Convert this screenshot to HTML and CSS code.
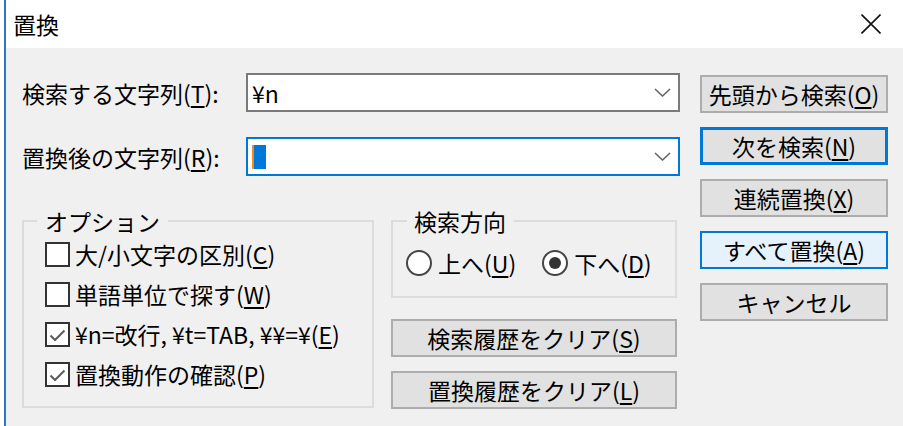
FILE: index.html
```html
<!DOCTYPE html>
<html lang="ja">
<head>
<meta charset="utf-8">
<title>置換</title>
<link rel="stylesheet" href="styles.css">
</head>
<body>
<div class="window">
  <div class="titlebar">
    <span class="title">置換</span>
    <svg class="close" width="20" height="20" viewBox="0 0 20 20"><path d="M0.5 0.5 L19.5 19.5 M19.5 0.5 L0.5 19.5" stroke="#111" stroke-width="1.6" fill="none"/></svg>
  </div>
  <div class="dialog">
    <div class="left">
      <div class="field-row">
        <label class="field-label">検索する文字列(<u>T</u>):</label>
        <div class="combo">
          <span class="combo-text">¥n</span>
          <svg class="chev" width="17" height="9" viewBox="0 0 17 9"><polyline points="1,1 8.5,8 16,1" stroke="#666" stroke-width="1.6" fill="none"/></svg>
        </div>
      </div>
      <div class="field-row second">
        <label class="field-label">置換後の文字列(<u>R</u>):</label>
        <div class="combo focused">
          <span class="combo-text"><span class="sel"></span></span>
          <svg class="chev" width="17" height="9" viewBox="0 0 17 9"><polyline points="1,1 8.5,8 16,1" stroke="#666" stroke-width="1.6" fill="none"/></svg>
        </div>
      </div>
      <div class="lower">
        <fieldset class="group options">
          <legend>オプション</legend>
          <div class="checks">
            <div class="check-row"><span class="cb"></span><span>大/小文字の区別(<u>C</u>)</span></div>
            <div class="check-row"><span class="cb"></span><span>単語単位で探す(<u>W</u>)</span></div>
            <div class="check-row"><span class="cb"><svg width="21" height="21" viewBox="0 0 21 21"><polyline points="3.5,11.5 8,16 17.5,6.5" stroke="#5c5c5c" stroke-width="2" fill="none"/></svg></span><span>¥n=改行, ¥t=TAB, ¥¥=¥(<u>E</u>)</span></div>
            <div class="check-row"><span class="cb"><svg width="21" height="21" viewBox="0 0 21 21"><polyline points="3.5,11.5 8,16 17.5,6.5" stroke="#5c5c5c" stroke-width="2" fill="none"/></svg></span><span>置換動作の確認(<u>P</u>)</span></div>
          </div>
        </fieldset>
        <div class="lower-right">
          <fieldset class="group direction">
            <legend>検索方向</legend>
            <div class="radios">
              <div class="radio-item"><span class="rb"></span><span>上へ(<u>U</u>)</span></div>
              <div class="radio-item"><span class="rb on"></span><span>下へ(<u>D</u>)</span></div>
            </div>
          </fieldset>
          <div class="clear-buttons">
            <button class="btn">検索履歴をクリア(<u>S</u>)</button>
            <button class="btn">置換履歴をクリア(<u>L</u>)</button>
          </div>
        </div>
      </div>
    </div>
    <div class="buttons">
      <button class="btn">先頭から検索(<u>O</u>)</button>
      <button class="btn default">次を検索(<u>N</u>)</button>
      <button class="btn">連続置換(<u>X</u>)</button>
      <button class="btn hover">すべて置換(<u>A</u>)</button>
      <button class="btn">キャンセル</button>
    </div>
  </div>
</div>
</body>
</html>
```
FILE: styles.css
```css
* { box-sizing: border-box; }

html, body {
  margin: 0;
  padding: 0;
  background: #ffffff;
}

body {
  font-family: "Noto Sans CJK JP", "Noto Sans", sans-serif;
  font-size: 23px;
  line-height: 26px;
  color: #000;
  width: 903px;
  height: 426px;
  overflow: hidden;
}

u {
  text-decoration: underline;
  text-decoration-thickness: 2px;
  text-underline-offset: 3px;
}

.window {
  margin-left: 4px;
  height: 426px;
  border-left: 2px solid #2a79c8;
  display: flex;
  flex-direction: column;
}

.titlebar {
  height: 48px;
  flex: none;
  background: #ffffff;
  display: flex;
  align-items: center;
  justify-content: space-between;
  padding: 0 22px 0 7px;
}

.title {
  font-size: 23px;
}

.close {
  display: block;
}

.dialog {
  flex: 1;
  background: #f0f0f0;
  display: flex;
  align-items: flex-start;
  padding: 25px 0 0 16px;
}

.left {
  width: 658px;
  flex: none;
}

.field-row {
  display: flex;
  align-items: center;
  height: 39px;
}

.field-row.second {
  margin-top: 25px;
}

.field-label {
  width: 224px;
  flex: none;
  white-space: nowrap;
}

.combo {
  width: 434px;
  height: 39px;
  background: #fff;
  border: 2px solid #7a7a7a;
  display: flex;
  align-items: center;
  justify-content: space-between;
  padding: 0 7px 0 4px;
}

.combo.focused {
  border-color: #0078d7;
}

.combo-text {
  display: flex;
  align-items: center;
  white-space: nowrap;
}

.sel {
  display: block;
  width: 14px;
  height: 24px;
  background: #0078d7;
  border-left: 2px solid #f08a24;
}

.chev {
  display: block;
}

.lower {
  display: flex;
  gap: 17px;
  margin-top: 32px;
}

.group {
  margin: 0;
  border: 2px solid #dcdcdc;
  min-inline-size: 0;
}

.group legend {
  padding: 0 8px;
  line-height: 26px;
}

.options {
  width: 352px;
  height: 200px;
  padding: 0 0 0 13px;
}

.checks {
  padding-left: 8px;
}

.check-row {
  height: 40px;
  display: flex;
  align-items: center;
  gap: 5px;
  white-space: nowrap;
}

.cb {
  width: 25px;
  height: 25px;
  flex: none;
  background: #fff;
  border: 2px solid #333;
  display: flex;
  align-items: center;
  justify-content: center;
}

.cb svg {
  display: block;
}

.lower-right {
  width: 286px;
  flex: none;
}

.direction {
  width: 286px;
  height: 90px;
  padding: 0 0 0 13px;
}

.direction legend {
  padding: 0 8px 0 7px;
  margin-left: 1px;
}

.radios {
  display: flex;
  gap: 26px;
  margin-top: 9px;
  height: 40px;
  align-items: center;
}

.radio-item {
  display: flex;
  align-items: center;
  gap: 6px;
  white-space: nowrap;
}

.rb {
  width: 26px;
  height: 26px;
  flex: none;
  border-radius: 50%;
  background: #fff;
  border: 2px solid #454545;
  display: flex;
  align-items: center;
  justify-content: center;
}

.rb.on::after {
  content: "";
  width: 12px;
  height: 12px;
  border-radius: 50%;
  background: #333;
}

.clear-buttons {
  margin-top: 21px;
  display: flex;
  flex-direction: column;
  gap: 14px;
}

.btn {
  font-family: inherit;
  font-size: 23px;
  line-height: 26px;
  color: #000;
  height: 38px;
  width: 100%;
  padding: 0;
  margin: 0;
  background: #e1e1e1;
  border: 2px solid #adadad;
  border-radius: 0;
  white-space: nowrap;
}

.btn.default {
  border: 3px solid #0078d7;
}

.btn.hover {
  background: #e5f1fb;
  border-color: #0078d7;
}

.buttons {
  width: 188px;
  flex: none;
  margin-left: 20px;
  margin-top: 2px;
  display: flex;
  flex-direction: column;
  gap: 14px;
}
```
